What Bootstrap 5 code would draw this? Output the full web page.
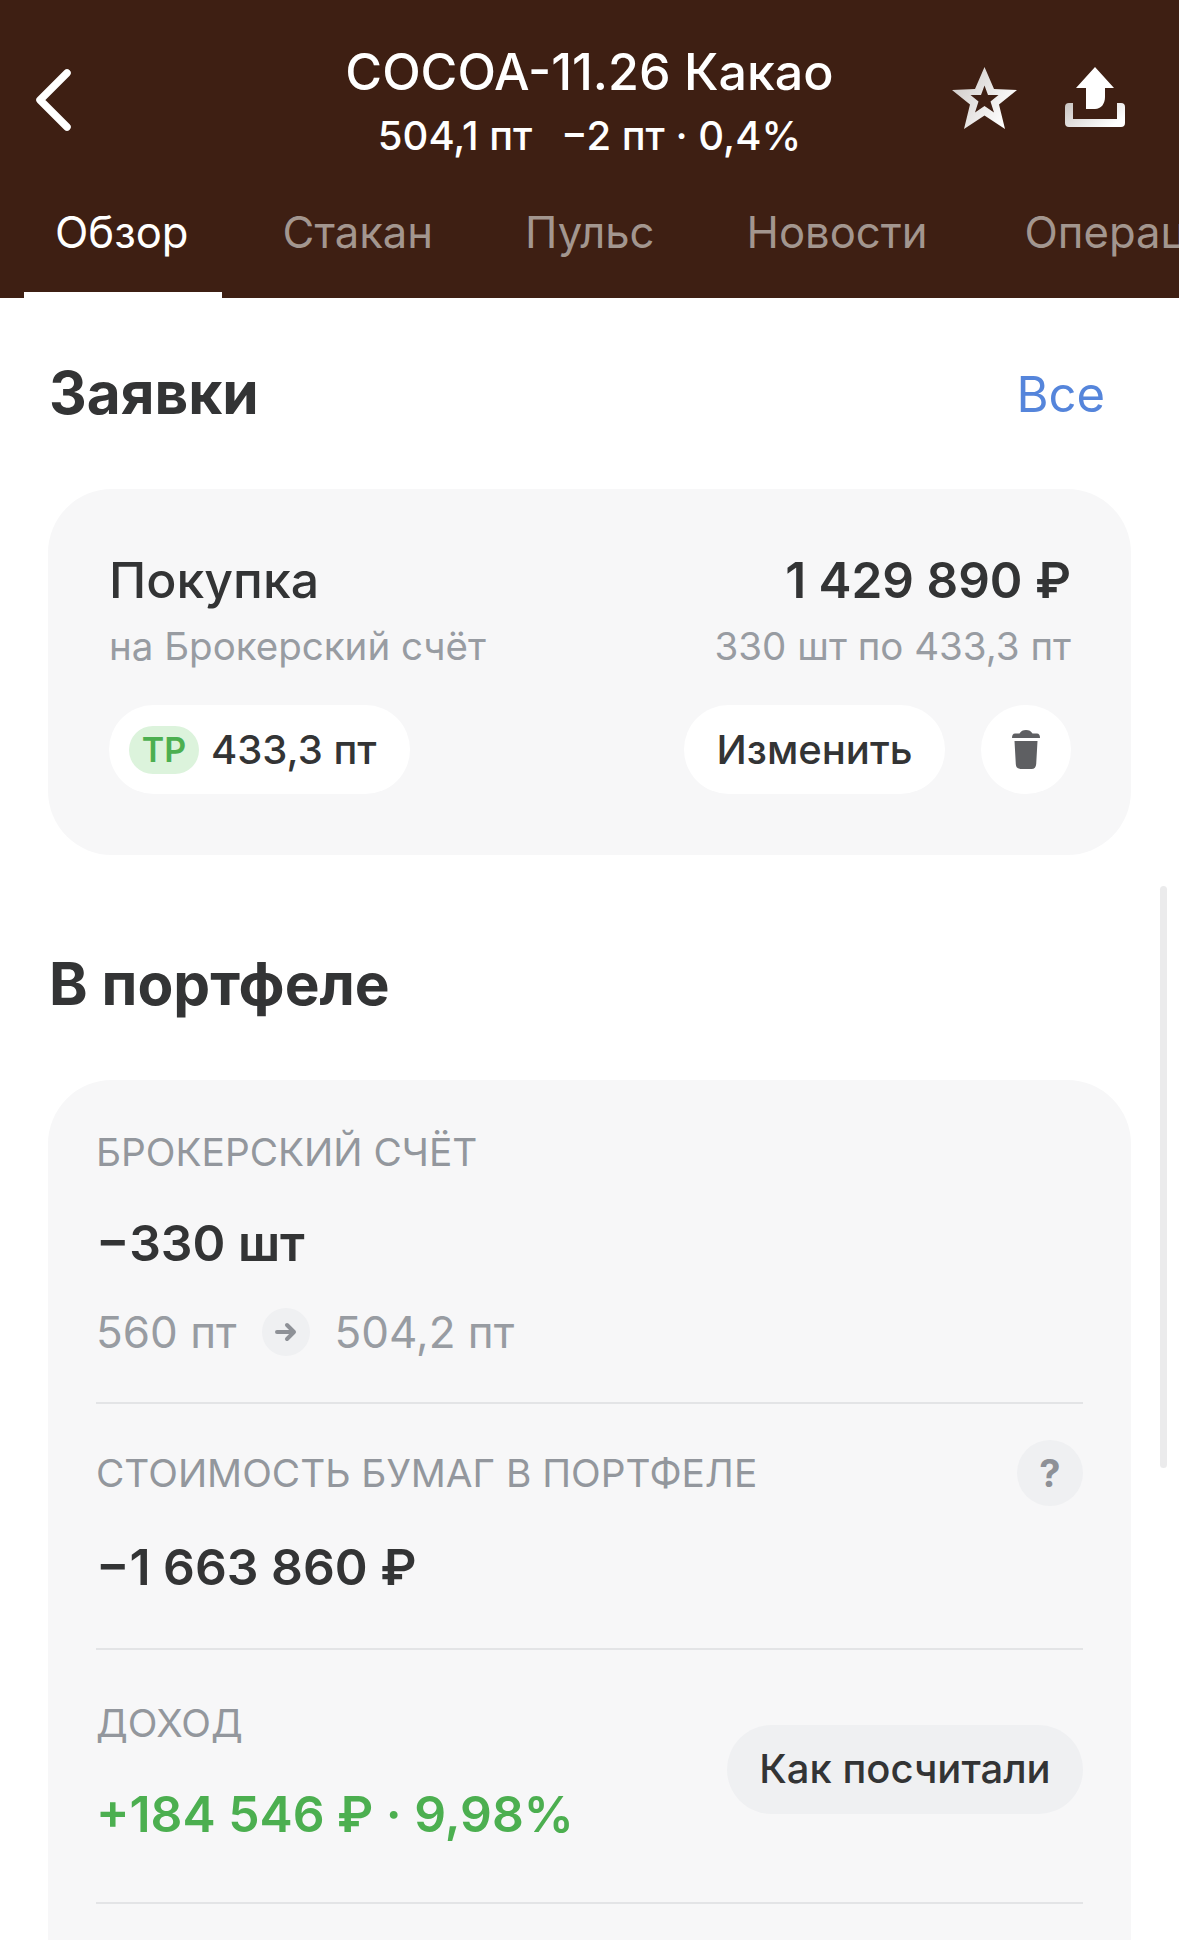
<!DOCTYPE html>
<html lang="ru">
<head>
  <meta charset="UTF-8" />
  <meta name="viewport" content="width=device-width, initial-scale=1.0"/>
  <title>COCOA-11.26 Какао</title>
  <link href="https://cdn.jsdelivr.net/npm/bootstrap@5.3.0/dist/css/bootstrap.min.css" rel="stylesheet">
  <style>
    html, body { height: 1940px; overflow: hidden; }
    body { font-family: Inter, "Noto Sans", sans-serif; background: #fff; color: #333435; position: relative; }
    .top-head { background: #3e1f13; height: 298px; color: #fff; }
    .title-row { padding-top: 40px; }
    .side-left { width: 227px; padding-left: 34px; padding-top: 29px; }
    .side-right { width: 227px; padding-right: 54px; padding-top: 27px; gap: 48px; }
    .instr-title { font-size: 50.2px; line-height: 64px; font-weight: 500; }
    .instr-sub { font-size: 40px; line-height: 52px; font-weight: 500; margin-top: 6px; }
    .instr-sub span { margin-left: 18px; }
    .tabs-row { margin-top: 43px; padding-left: 24px; gap: 30px; white-space: nowrap; overflow: hidden; }
    .tab-item { font-size: 43.6px; line-height: 56px; padding: 0 31px 31px; color: #a3968f; border-bottom: 6px solid transparent; }
    .tab-item.on { color: #fff; border-bottom-color: #fff; padding-right: 33px; }
    .tab-item:last-child { margin-left: 5px; }
    .sect-head { padding: 0 74px 0 49px; height: 68px; }
    .sect-title { font-size: 58.5px; line-height: 68px; font-weight: 700; color: #333435; margin: 0; }
    .sect-link { font-size: 49px; line-height: 68px; color: #5585db; text-decoration: none; margin-top: 3px; }
    .box-soft { background: #f7f7f8; border-radius: 64px; margin: 0 48px; }
    .order-box { padding: 61px 60px 61px 61px; }
    .order-name { font-size: 50px; line-height: 60px; font-weight: 500; }
    .order-sum { font-size: 49.5px; line-height: 60px; font-weight: 600; }
    .muted-line { font-size: 38.5px; line-height: 48px; color: #989ca2; margin-top: 12px; }
    .pill-white { background: #fff; height: 89px; border-radius: 45px; font-size: 40px; font-weight: 500; }
    .pill-price { padding: 0 34px 0 20px; gap: 12px; }
    .tp-mark { background: #dcf3dc; color: #4caf50; width: 70px; height: 48px; border-radius: 24px; font-size: 34px; font-weight: 600; }
    .pill-edit { padding: 0 30px; width: 261px; }
    .pill-trash { width: 90px; }
    .pos-box { padding: 50px 48px 0; height: 860px; border-bottom-left-radius: 0; border-bottom-right-radius: 0; }
    .cap-label { font-size: 38.8px; line-height: 44px; color: #93979d; }
    .big-val { font-size: 49.8px; line-height: 60px; font-weight: 600; }
    .price-row { font-size: 44px; line-height: 48px; color: #989ca2; gap: 25px; }
    .round-gray { background: #eff0f2; border-radius: 50%; color: #8e9197; }
    .round-arrow { width: 48px; height: 48px; }
    .round-help { width: 66px; height: 66px; font-size: 38px; font-weight: 700; }
    .pos-line { height: 2px; background: #e3e4e6; }
    .pill-gray { background: #eff0f2; height: 89px; width: 356px; border-radius: 45px; font-size: 40px; font-weight: 500; margin-bottom: 7px; }
    .green-val { font-size: 49.8px; line-height: 60px; font-weight: 600; color: #4caf50; }
    .scroll-thumb { position: absolute; left: 1160px; top: 886px; width: 7px; height: 582px; border-radius: 4px; background: #ebebec; }
  </style>
</head>
<body>

<header class="top-head">
  <div class="title-row d-flex">
    <div class="side-left flex-shrink-0">
      <svg width="38" height="62" viewBox="0 0 38 62"><path d="M33 4 6 31l27 27" fill="none" stroke="#fff" stroke-width="7.500" stroke-linecap="round" stroke-linejoin="round"/></svg>
    </div>
    <div class="flex-grow-1 text-center text-nowrap">
      <div class="instr-title">COCOA-11.26 Какао</div>
      <div class="instr-sub">504,1 пт <span>−2 пт · 0,4%</span></div>
    </div>
    <div class="side-right d-flex justify-content-end flex-shrink-0">
      <svg width="65" height="62" viewBox="0 0 65 62">
        <defs>
          <linearGradient id="shine" x1="0" y1="0" x2="1" y2="0.6">
            <stop offset="0" stop-color="#c9c4c1"/><stop offset="1" stop-color="#fff"/>
          </linearGradient>
        </defs>
        <path fill="url(#shine)" fill-rule="evenodd" d="M32.500 0 42 22l23 1-18 14.500L53 62 32.500 48.500 12 62l6-24.500L0 23l23-1zM32.500 18.500 29 28H18.500l8 6.500L23 45.500l9.500-6.500 9.500 6.500-3.500-11 8-6.500H36z"/>
      </svg>
      <svg width="60" height="61" viewBox="0 0 60 61">
        <path fill="#fff" d="M30 0 49 21H40V30C40 37 36 42 30 42H21V21H11z"/>
        <path fill="url(#shine)" d="M4 36H8V52H52V36H56a4 4 0 0 1 4 4V56a4 4 0 0 1-4 4H4a4 4 0 0 1-4-4V40a4 4 0 0 1 4-4z"/>
      </svg>
    </div>
  </div>
  <div class="tabs-row d-flex">
    <div class="tab-item on">Обзор</div>
    <div class="tab-item">Стакан</div>
    <div class="tab-item">Пульс</div>
    <div class="tab-item">Новости</div>
    <div class="tab-item">Операции</div>
  </div>
</header>

<main>
  <div class="sect-head d-flex justify-content-between align-items-center" style="margin-top:61px;margin-bottom:62px">
    <h2 class="sect-title">Заявки</h2>
    <a class="sect-link" href="#">Все</a>
  </div>

  <section class="box-soft order-box">
    <div class="d-flex justify-content-between">
      <div>
        <div class="order-name">Покупка</div>
        <div class="muted-line">на Брокерский счёт</div>
      </div>
      <div class="text-end">
        <div class="order-sum">1 429 890 ₽</div>
        <div class="muted-line">330 шт по 433,3 пт</div>
      </div>
    </div>
    <div class="d-flex justify-content-between" style="margin-top:35px">
      <div class="pill-white pill-price d-flex align-items-center">
        <span class="tp-mark d-flex align-items-center justify-content-center">TP</span>
        <span>433,3 пт</span>
      </div>
      <div class="d-flex" style="column-gap:36px">
        <div class="pill-white pill-edit d-flex align-items-center justify-content-center">Изменить</div>
        <div class="pill-white pill-trash d-flex align-items-center justify-content-center">
          <svg width="28" height="39" viewBox="0 0 28 39"><path fill="#5e5f62" d="M14 0c3 0 5 1 6.500 3.500H25c2 0 3 1.500 3 4.500H0c0-3 1-4.500 3-4.500h4.500C9 1 11 0 14 0zM2.500 11h23l-1.300 23c-.2 3-1.700 5-4.700 5H8.500c-3 0-4.500-2-4.700-5z"/></svg>
        </div>
      </div>
    </div>
  </section>

  <div class="sect-head d-flex" style="margin-top:95px;margin-bottom:62px">
    <h2 class="sect-title">В портфеле</h2>
  </div>

  <section class="box-soft pos-box">
    <div class="cap-label">БРОКЕРСКИЙ СЧЁТ</div>
    <div class="big-val" style="margin-top:39px">−330 шт</div>
    <div class="price-row d-flex align-items-center" style="margin-top:35px">
      <span>560 пт</span>
      <span class="round-gray round-arrow d-flex align-items-center justify-content-center">
        <svg width="22" height="20" viewBox="0 0 22 20"><path d="M2 10h17M12 3l7 7-7 7" fill="none" stroke="#8e9197" stroke-width="4" stroke-linecap="round" stroke-linejoin="round"/></svg>
      </span>
      <span>504,2 пт</span>
    </div>
    <div class="pos-line" style="margin-top:46px"></div>

    <div class="d-flex justify-content-between align-items-center" style="margin-top:36px">
      <div class="cap-label">СТОИМОСТЬ БУМАГ В ПОРТФЕЛЕ</div>
      <div class="round-gray round-help d-flex align-items-center justify-content-center">?</div>
    </div>
    <div class="big-val" style="margin-top:31px">−1 663 860 ₽</div>
    <div class="pos-line" style="margin-top:51px"></div>

    <div class="d-flex justify-content-between align-items-center" style="margin-top:51px">
      <div>
        <div class="cap-label">ДОХОД</div>
        <div class="green-val" style="margin-top:39px">+184 546 ₽ · 9,98%</div>
      </div>
      <div class="pill-gray d-flex align-items-center justify-content-center">Как посчитали</div>
    </div>
    <div class="pos-line" style="margin-top:58px"></div>
  </section>
</main>

<div class="scroll-thumb"></div>

<script src="https://cdn.jsdelivr.net/npm/bootstrap@5.3.0/dist/js/bootstrap.bundle.min.js"></script>
</body>
</html>
